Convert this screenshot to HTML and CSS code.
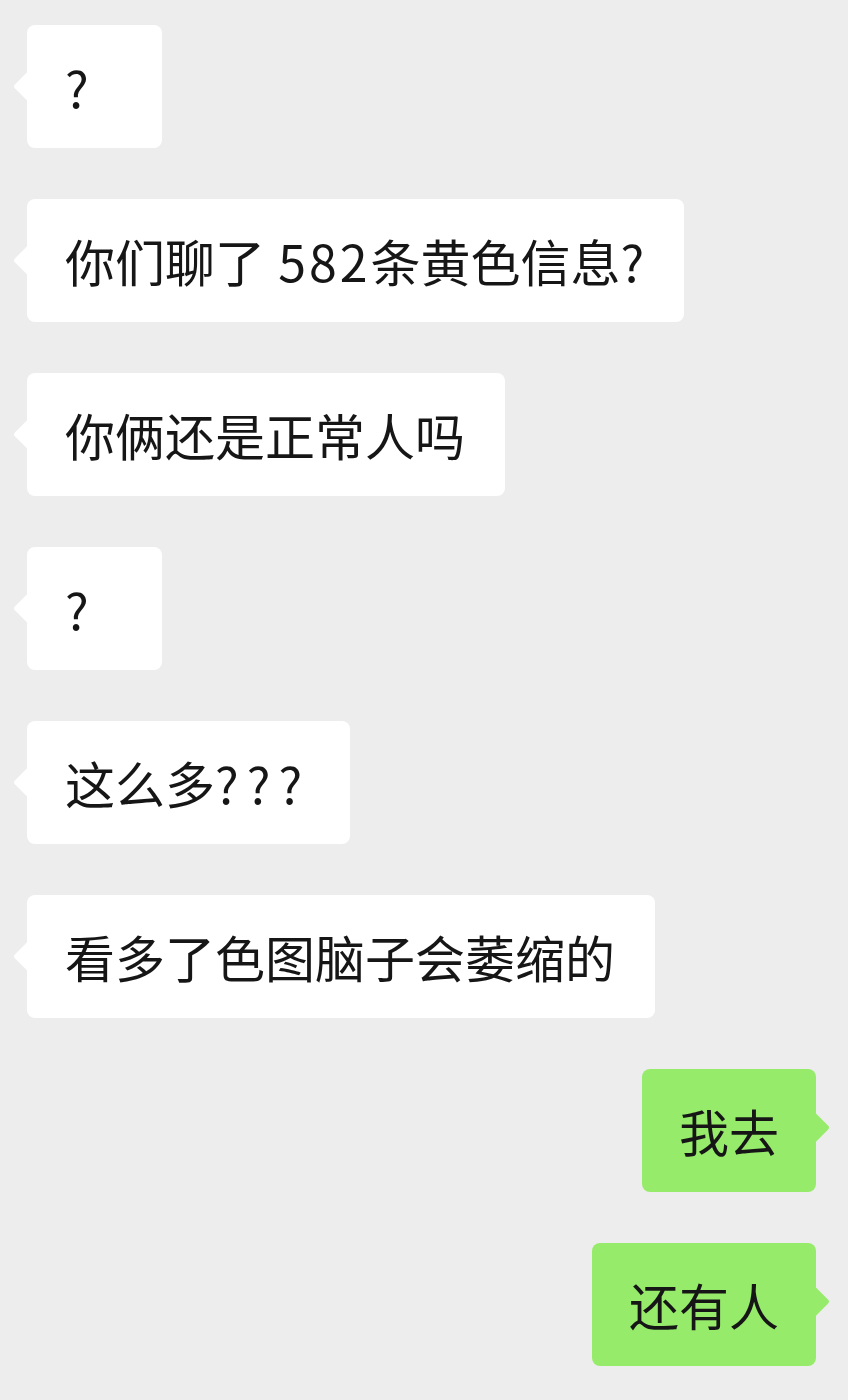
FILE: index.html
```html
<!DOCTYPE html>
<html lang="zh-CN">
<head>
  <meta charset="UTF-8" />
  <title>聊天</title>
  <link rel="stylesheet" href="styles.css">
</head>
<body>
  <div class="chat">
    <div class="row in"><div class="bubble">?</div></div>
    <div class="row in"><div class="bubble">你们聊了 <span class="num">582</span>条黄色信息?</div></div>
    <div class="row in"><div class="bubble">你俩还是正常人吗</div></div>
    <div class="row in"><div class="bubble">?</div></div>
    <div class="row in"><div class="bubble">这么多<span class="qs">???</span></div></div>
    <div class="row in"><div class="bubble">看多了色图脑子会萎缩的</div></div>
    <div class="row out"><div class="bubble">我去</div></div>
    <div class="row out"><div class="bubble">还有人</div></div>
  </div>
</body>
</html>
```

FILE: styles.css
```css
/* ── BASE ─────────────────────────────────────────────── */
* { margin: 0; padding: 0; box-sizing: border-box; }
body {
  font-family: "Noto Sans CJK SC", "Noto Sans", sans-serif;
  background: #EDEDED;
  color: #161616;
}

/* ── CHAT LIST ────────────────────────────────────────── */
.chat {
  display: flex;
  flex-direction: column;
  gap: 51px;
  padding: 25px 32px 0 27px;
}
.row { display: flex; }
.row.out { justify-content: flex-end; }

/* ── BUBBLES ──────────────────────────────────────────── */
.bubble {
  position: relative;
  min-width: 135px;
  padding: 26px 40px 26px 38px;
  font-size: 50px;
  line-height: 71px;
  border-radius: 8px;
  background: #FFFFFF;
  white-space: nowrap;
}
.bubble::before {
  content: "";
  position: absolute;
  top: 47px;
  width: 26px;
  height: 26px;
  border-radius: 3px;
  background: inherit;
  transform: rotate(45deg) scaleX(0.85);
}
.in .bubble::before { left: -10px; }
.out .bubble {
  padding: 26px 37px;
  background: #97EB6B;
}
.out .bubble::before { right: -10px; }

.num { letter-spacing: 3px; padding-left: 2px; }
.qs { letter-spacing: 8px; }
```
